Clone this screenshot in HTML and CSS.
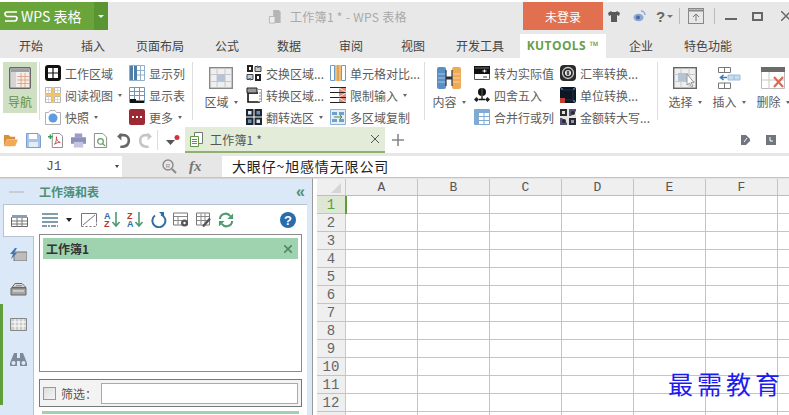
FILE: index.html
```html
<!DOCTYPE html>
<html lang="zh">
<head>
<meta charset="utf-8">
<title>工作簿1 - WPS 表格</title>
<link rel="stylesheet" href="styles.css">
</head>
<body>
<div class="app">
  <header class="titlebar">
    <div class="brand">
      <div class="brand-main"><svg class="brand-s" viewBox="0 0 14 11"><path d="M13 1H3Q1 1 1 3T3 5.500H11Q13 5.500 13 7.500T11 10H1" fill="none" stroke="#fff" stroke-width="1.700"/></svg><span>WPS 表格</span></div>
      <div class="brand-arrow"><i></i></div>
    </div>
    <div class="doc-title">
      <svg class="ic14" viewBox="0 0 14 16"><path d="M5 1h6l2 2v12H5z" fill="#b5b5b5"/><path d="M1 8h6v7H1z" fill="#eee" stroke="#b5b5b5"/></svg>
      <span>工作簿1 * - WPS 表格</span>
    </div>
    <div class="login">未登录</div>
    <div class="winctl">
      <svg class="w-shirt" viewBox="0 0 12 11"><path d="M3 0 0 2l1 3 2-1v7h6V4l2 1 1-3-3-2-1 1H4z" fill="#5a5a5a"/></svg>
      <svg class="w-weibo" viewBox="0 0 13 12"><ellipse cx="5.500" cy="7.500" rx="5" ry="3.800" fill="#8aa9d2"/><circle cx="5" cy="7.500" r="2" fill="#4a6d9f"/><path d="M8 1a4 4 0 0 1 4 4" stroke="#8aa9d2" fill="none" stroke-width="1.500"/></svg>
      <span class="w-help">?</span><i class="w-caret"></i>
      <b class="w-sep"></b>
      <svg class="w-up" viewBox="0 0 16 16"><rect x=".5" y=".5" width="15" height="15" fill="none" stroke="#888"/><path d="M1 2.500h14" stroke="#888" stroke-width="2"/><path d="M8 13V6M5 9l3-3 3 3" stroke="#777" fill="none"/></svg>
      <b class="w-sep w-sep2"></b>
      <b class="w-min"></b>
      <b class="w-max"></b>
      <svg class="w-close" viewBox="0 0 10 10"><path d="M0 0l10 10M0 10 10 0" stroke="#666" stroke-width="1.500"/></svg>
    </div>
  </header>

  <nav class="tabs">
    <span class="tab">开始</span><span class="tab">插入</span><span class="tab wide">页面布局</span><span class="tab">公式</span><span class="tab">数据</span><span class="tab">审阅</span><span class="tab">视图</span><span class="tab wide">开发工具</span>
    <span class="tab-active">KUTOOLS ™</span>
    <span class="tab">企业</span><span class="tab wide">特色功能</span>
  </nav>

  <section class="ribbon">
    <div class="big nav-btn">
      <svg class="ic-big" viewBox="0 0 22 22"><rect x=".7" y=".7" width="20.600" height="20.600" rx="1" fill="#eee" stroke="#666" stroke-width="1.400"/><path d="M2 2h18v3H2z" fill="#a0a0a0"/><path d="M2 5h5v15H2z" fill="#d5d5d5"/><path d="M8 6h12v14H8z" fill="#f8ece4"/><path d="M8 9.500h12M8 13h12M8 16.500h12M12 6v14M16 6v14" stroke="#d99a80" stroke-width=".8"/></svg>
      <span>导航</span>
    </div>
    <b class="rsep sep1"></b>
    <div class="col c1">
      <div class="item"><svg class="ic" viewBox="0 0 16 16"><rect width="16" height="16" rx="3" fill="#111"/><rect x="3" y="3" width="10" height="10" fill="#fff"/><path d="M3 8h10M8 3v10" stroke="#111" stroke-width="1.200"/></svg>工作区域</div>
      <div class="item"><svg class="ic" viewBox="0 0 16 16"><path d="M.5.500h6v6h-6zM9.500.500h6v6h-6zM.5 9.500h6v6h-6zM9.500 9.500h6v6h-6z" fill="#fff" stroke="#b5b5b5"/><path d="M3.500 1v14M12.500 1v14M1 3.500h14M1 12.500h14" stroke="#ccc" stroke-width=".7"/><path d="M8 0v16M0 8h16" stroke="#f3c567" stroke-width="2.400"/></svg>阅读视图<i class="caret"></i></div>
      <div class="item"><svg class="ic" viewBox="0 0 16 16"><path d="M.5 3.500h3l1.500-2h5l1.500 2h4v12H.5z" fill="#fff" stroke="#b0b0b0"/><circle cx="8" cy="9" r="4.500" fill="#5f9be0"/></svg>快照<i class="caret"></i></div>
    </div>
    <div class="col c2">
      <div class="item"><svg class="ic" viewBox="0 0 16 16"><path d="M.5.500h15v15H.5z" fill="#fff" stroke="#8fb0cc"/><path d="M1 1h3v14H1zM5 1h3v14H5z" fill="#4d7fa8"/><path d="M8 5.500h7M8 10h7M11.500 1v14" stroke="#8fb0cc"/></svg>显示列</div>
      <div class="item"><svg class="ic" viewBox="0 0 16 16"><path d="M.5.500h15v15H.5z" fill="#fff" stroke="#6f98ba"/><path d="M1 4.500h14M1 8.500h14M5.500 1v12M10.500 1v12" stroke="#6f98ba"/><path d="M1 12h6v1.500h8V16H1z" fill="#111"/></svg>显示表</div>
      <div class="item"><svg class="ic" viewBox="0 0 16 16"><rect width="16" height="16" rx="2" fill="#9c2a33"/><path d="M3 7h2v2H3zM7 7h2v2H7zM11 7h2v2h-2z" fill="#fff"/></svg>更多<i class="caret"></i></div>
    </div>
    <b class="rsep sep2"></b>
    <div class="big b-area">
      <svg class="ic-big" viewBox="0 0 24 22"><rect x=".7" y=".7" width="22.600" height="20.600" fill="#efefef" stroke="#888" stroke-width="1.400"/><path d="M1 7.500h22M1 14.500h22M8 1v20M16 1v20" stroke="#c8c8c8"/><path d="M8 7.500h8v7H8z" fill="#b4c4d2"/></svg>
      <span>区域<i class="caret"></i></span>
    </div>
    <div class="col c3">
      <div class="item"><svg class="ic" viewBox="0 0 16 16"><path d="M1 0h6v7H1z" fill="#222"/><path d="M3 2h2v3H3z" fill="#fff"/><path d="M9 1.500h6v5H9z" fill="#ccc" stroke="#444"/><path d="M11 0l3 3h-3z" fill="#4d7fa8"/><path d="M1 9.500h6v5H1z" fill="#ccc" stroke="#444"/><path d="M5 16l-3-3h3z" fill="#4d7fa8"/><path d="M9 9h6v7H9z" fill="#222"/><path d="M11 11h2v3h-2z" fill="#fff"/></svg>交换区域...</div>
      <div class="item"><svg class="ic" viewBox="0 0 16 16"><path d="M2 6h11v9H2z" fill="#fff" stroke="#111" stroke-width="1.600"/><path d="M1 1h10v5H1z" fill="#999" stroke="#222"/><path d="M12 2.500h3.500v12H12" fill="#fff" stroke="#888" stroke-width=".8"/><path d="M13 6h2M13 9h2M13 12h2" stroke="#888"/></svg>转换区域...</div>
      <div class="item"><svg class="ic" viewBox="0 0 16 16"><path d="M0 0h7.500v7.500H0zM8.500 0H16v7.500H8.500zM0 8.500h7.500V16H0zM8.500 8.500H16V16H8.500z" fill="#1d2732"/><path d="M2 2h3.500v3.500H2zM10.500 10.500H14V14h-3.500z" fill="#dfe6ee"/><path d="M10.500 2H14v3.500h-3.500zM2 10.500h3.500V14H2z" fill="#6f94b8"/></svg>翻转选区<i class="caret"></i></div>
    </div>
    <div class="col c4">
      <div class="item"><svg class="ic" viewBox="0 0 16 16"><path d="M.5.500h4v15h-4zM11.500.500h4v15h-4z" fill="#fff" stroke="#6b9cc8"/><path d="M5 0h6v16H5z" fill="#efbd78"/><path d="M8 0v16" stroke="#c58b3a"/></svg>单元格对比...</div>
      <div class="item"><svg class="ic" viewBox="0 0 16 16"><path d="M0 .500h16M0 5.500h16M0 10.500h16M0 15.500h16" stroke="#222" stroke-width="1.200"/><path d="M9 1h7v4H9zM9 6h7v4H9zM9 11h7v4H9z" fill="#e58d7c"/><path d="M9 1l7 4M16 6l-7 4M9 11l7 4" stroke="#fff" stroke-width=".7"/></svg>限制输入<i class="caret"></i></div>
      <div class="item"><svg class="ic" viewBox="0 0 16 16"><path d="M.5.500h15v15H.5z" fill="#e3eef8" stroke="#8db2d5"/><path d="M2 3h5v3H2zM9 3h5v3H9zM2 10h5v3H2zM9 10h5v3H9z" fill="#6ea0cf"/><path d="M4 8h8M10 6l2 2-2 2" stroke="#4b8a3a" fill="none"/></svg>多区域复制</div>
    </div>
    <b class="rsep sep3"></b>
    <div class="big b-content">
      <svg class="ic-big" viewBox="0 0 24 22"><rect x="0" y="0" width="9" height="22" rx="2" fill="#5a8fc6"/><rect x="15" y="0" width="9" height="22" rx="2" fill="#eeaa56"/><path d="M9 11h6" stroke="#26323e" stroke-width="3"/><path d="M9 3v16M15 3v16" stroke="#2c3a47" stroke-width="1.200"/><path d="M1 7h7M1 11h7M1 15h7M16 7h7M16 11h7M16 15h7" stroke="#fff" stroke-width=".5"/></svg>
      <span>内容<i class="caret"></i></span>
    </div>
    <div class="col c5">
      <div class="item"><svg class="ic" viewBox="0 0 16 16"><path d="M.5 1.500h15v13H.5z" fill="#fff" stroke="#555"/><path d="M0 1h16v8H0z" fill="#111"/><path d="M1 3h14" stroke="#bbb" stroke-width=".6"/><path d="M8.500 6h4M10.500 4.500v3" stroke="#fff"/><path d="M9 12h4" stroke="#444"/></svg>转为实际值</div>
      <div class="item"><svg class="ic" viewBox="0 0 16 16"><circle cx="8" cy="5" r="4" fill="#111"/><path d="M8 1v8" stroke="#777" stroke-width=".8"/><path d="M2.500 10 5 12.500 2.500 15 0 12.500zM13.500 10l2.500 2.500-2.500 2.500-2.500-2.500z" fill="#222"/><path d="M5 12.500h6M8 9v3.500" stroke="#111" stroke-width="1.300"/></svg>四舍五入</div>
      <div class="item"><svg class="ic" viewBox="0 0 16 16"><path d="M.5.500h15v15H.5z" fill="#fff" stroke="#7fabd3"/><path d="M1 1h4v14H1z" fill="#7fabd3"/><path d="M5 1h10v3H5z" fill="#7fabd3"/><path d="M5 7.500h10M5 11.500h10M10 4v11" stroke="#7fabd3"/></svg>合并行或列</div>
    </div>
    <div class="col c6">
      <div class="item"><svg class="ic" viewBox="0 0 16 16"><rect width="16" height="16" rx="4" fill="#2b2b2b"/><circle cx="8" cy="8" r="5.500" fill="none" stroke="#c9c9c9" stroke-width="1.300"/><circle cx="8" cy="8" r="3" fill="#fff"/><path d="M8 5.500v5M6.500 7h3M6.500 9h3" stroke="#222"/></svg>汇率转换...</div>
      <div class="item"><svg class="ic" viewBox="0 0 16 16"><rect width="16" height="16" rx="2" fill="#0e1623"/><path d="M0 11h5v5H0z" fill="#bf3e32"/><path d="M1 1h2v2H1zM13 1h2v2h-2zM13 13h2v2h-2z" fill="#41658c"/><path d="M3 3h10v10H5" fill="none" stroke="#1f3550"/></svg>单位转换...</div>
      <div class="item"><svg class="ic" viewBox="0 0 16 16"><path d="M0 0h16v16H0z" fill="#e5e5e5"/><path d="M0 0h7v7H0zM9 9h7v7H9z" fill="#2b2b2b"/><path d="M2 2h3v3H2z" fill="#ddd"/><path d="M9 0h7v2l-5 5H9zM0 9h2l5 5v2H0z" fill="#557"/><path d="M11 11h3v3h-3z" fill="#7fa0c4"/><circle cx="13" cy="4" r="2" fill="#2b2b2b"/><circle cx="4" cy="12" r="2" fill="#2b2b2b"/></svg>金额转大写...</div>
    </div>
    <b class="rsep sep4"></b>
    <div class="big b-sel">
      <svg class="ic-big" viewBox="0 0 24 22"><rect x=".7" y=".7" width="22.600" height="20.600" fill="#efefef" stroke="#666" stroke-width="1.400"/><path d="M1 7.500h22M1 14.500h22M8 1v20M16 1v20" stroke="#c8c8c8"/><path d="M5 6h10v8H5z" fill="#b4c4d2"/><path d="M14 7v11l2.500-2 2 4 1.500-1-2-3.500h3z" fill="#fff" stroke="#999"/></svg>
      <span>选择<i class="caret"></i></span>
    </div>
    <div class="big b-ins">
      <svg class="ic-big" viewBox="0 0 24 22"><path d="M1.500.500h12v5h-12zM1.500 16h12v5.500h-12zM7.500 16v5.500M7.500.500v5" fill="#fff" stroke="#777"/><path d="M11 8h12v5H11z" fill="#c7dbf0" stroke="#9bbcdc"/><path d="M17 8v5" stroke="#9bbcdc"/><path d="M10 10.500H4M6.500 8 3.500 10.500 6.500 13" stroke="#3f79b5" fill="none" stroke-width="1.600"/></svg>
      <span>插入<i class="caret"></i></span>
    </div>
    <div class="big b-del">
      <svg class="ic-big" viewBox="0 0 24 22"><path d="M.500.500h23v21H.5z" fill="#fff" stroke="#bbb"/><path d="M0 0h24v5H0z" fill="#6b6b6b"/><path d="M8 5v17M1 13h22" stroke="#c8c8c8"/><path d="M13 10l9 10M22 10l-9 10" stroke="#dd6a56" stroke-width="2.200"/></svg>
      <span>删除<i class="caret"></i></span>
    </div>
  </section>

  <section class="quick">
    <div class="qicons">
      <svg class="q" viewBox="0 0 16 14"><path d="M1 1h5l2 2h5v3H4L1 13z" fill="#d9903c"/><path d="M4 6h12l-3 7H1z" fill="#f0ab5a"/></svg>
      <svg class="q" viewBox="0 0 15 15"><path d="M.500.500H12l2.500 2.500v11.500H.5z" fill="#a9c4e4" stroke="#7b9fcc"/><path d="M3 1h8v5H3z" fill="#fff"/><path d="M3 9h9v5H3z" fill="#e3edf8"/></svg>
      <svg class="q" viewBox="0 0 16 16"><path d="M4.500.500h8l3 3v12h-11z" fill="#fff" stroke="#888"/><path d="M7 12c2-2 2-6 2-8 0 3 1 5 4 6-2 0-4 .5-6 2z" fill="none" stroke="#c8403a"/><path d="M0 4h5M2.500 1.500v5" stroke="#3d9a5a" stroke-width="1.500"/></svg>
      <svg class="q" viewBox="0 0 16 15"><path d="M4 0h8v4H4z" fill="#9d9dc4"/><path d="M0 4h16v7H0z" fill="#8f8fbb"/><path d="M3 9h10v6H3z" fill="#c5c5dd"/></svg>
      <svg class="q" viewBox="0 0 14 16"><path d="M.500.500h9l4 4v11H.5z" fill="#fff" stroke="#888"/><circle cx="7" cy="9" r="3" fill="none" stroke="#5fa05f" stroke-width="1.300"/><path d="M9 11l3 3" stroke="#5fa05f" stroke-width="1.300"/></svg>
      <svg class="q" viewBox="0 0 14 14"><path d="M4 13c6 0 8-3 8-6s-2-5-5-5H3" fill="none" stroke="#666" stroke-width="2.400"/><path d="M5 0 1 3l4 4z" fill="#666"/></svg>
      <svg class="q" viewBox="0 0 14 14"><path d="M10 13c-6 0-8-3-8-6s2-5 5-5h4" fill="none" stroke="#c5c5c5" stroke-width="2.400"/><path d="M9 0l4 3-4 4z" fill="#c5c5c5"/></svg>
      <b class="q-sep"></b>
      <svg class="q-more" viewBox="0 0 14 11"><path d="M0 5h9L4.500 10z" fill="#555"/><circle cx="11" cy="2.500" r="2.500" fill="#d8303a"/></svg>
    </div>
    <div class="doctab">
      <svg class="ic14" viewBox="0 0 14 15"><path d="M4.500.500h8v11h-8z" fill="#fff" stroke="#777"/><path d="M.500 4.500h8v10h-8z" fill="#fff" stroke="#5b9a3f"/><path d="M2 7.500h5M2 9.500h5M2 11.500h5" stroke="#5b9a3f"/></svg>
      <span>工作簿1 *</span>
      <svg class="doctab-x" viewBox="0 0 8 8"><path d="M0 0l8 8M0 8l8-8" stroke="#555"/></svg>
    </div>
    <svg class="q-plus" viewBox="0 0 12 12"><path d="M6 0v12M0 6h12" stroke="#888" stroke-width="1.600"/></svg>
    <div class="q-right">
      <svg class="q-r1" viewBox="0 0 9 10"><path d="M0 0h5l4 4v2l-4 4H0z" fill="#71757f"/><path d="M3 7l3-4" stroke="#fff"/></svg>
      <svg class="q-r2" viewBox="0 0 10 10"><path d="M0 0h10v10H0z" fill="#71757f"/><path d="M4 2v4h3" stroke="#fff" fill="none"/></svg>
    </div>
  </section>

  <section class="formula">
    <div class="namebox"><span>J1</span><i class="caret dark"></i></div>
    <div class="fx-tools">
      <svg class="mag" viewBox="0 0 15 15"><circle cx="6" cy="6" r="5" fill="none" stroke="#8a8a8a" stroke-width="1.400"/><path d="M10 10l4 4" stroke="#8a8a8a" stroke-width="2"/><text x="3.800" y="8.500" class="mag-r">R</text></svg>
      <span class="fx">fx</span>
    </div>
    <div class="fx-input">大眼仔~旭感情无限公司</div>
  </section>

  <main class="work">
    <aside class="panel">
      <div class="p-head">
        <b class="grip"></b>
        <span class="p-title">工作簿和表</span>
        <span class="p-collapse">«</span>
      </div>
      <div class="p-body">
        <div class="rail">
          <div class="rail-item on"><svg class="ri" viewBox="0 0 17 13"><path d="M.500 3.500h16v9H.5z" fill="#fff" stroke="#666"/><path d="M1 1h15v3H1z" fill="#8a9eb5"/><path d="M1 7h15M1 10h15M6 4v9M11 4v9" stroke="#777"/></svg></div>
          <div class="rail-item"><svg class="ri" viewBox="0 0 17 13"><path d="M4 4h13v9H4z" fill="#bdbdbd" stroke="#777"/><path d="M5 0 0 6h3l-2 5 6-6H4l3-5z" fill="#3f79b5"/></svg></div>
          <div class="rail-item"><svg class="ri" viewBox="0 0 17 13"><path d="M5 .500h7l4 4H2z" fill="#ddd" stroke="#666"/><path d="M6 2.500h6M4 4h8" stroke="#777" stroke-width=".7"/><path d="M1 5h15v7H1z" fill="#a5a5a5" stroke="#666"/><path d="M3 8h11" stroke="#eee"/></svg></div>
          <div class="rail-item"><svg class="ri" viewBox="0 0 17 13"><path d="M.500.500h16v12H.5z" fill="#ccc" stroke="#888"/><path d="M5 1v11M9 1v11M13 1v11M1 4h15M1 8h15" stroke="#fff"/></svg></div>
          <div class="rail-item"><svg class="ri" viewBox="0 0 17 13"><path d="M4 0h3v5h3V0h3l4 10v3h-7V8H7v5H0v-3z" fill="#7d8a99"/><circle cx="3.500" cy="10" r="2" fill="#dbe8f7"/><circle cx="13.500" cy="10" r="2" fill="#dbe8f7"/></svg></div>
        </div>
        <div class="p-content">
          <div class="p-tools">
            <svg class="t" viewBox="0 0 16 14"><path d="M0 1h16M0 5h16M0 9h16" stroke="#5a7f90" stroke-width="1.600"/><path d="M0 13h16" stroke="#5a7f90" stroke-width="1.600" stroke-dasharray="5 1 2 1"/></svg>
            <i class="t-caret"></i>
            <svg class="t" viewBox="0 0 16 14"><path d="M.500 13.500V.500h15v9" fill="none" stroke="#777"/><path d="M.500 13.500h15v-4" fill="none" stroke="#777" stroke-dasharray="2 2"/><path d="M2 12 14 2" stroke="#777"/></svg>
            <svg class="t2" viewBox="0 0 17 17"><text x="0" y="8" class="az blue">A</text><text x="0" y="16" class="az red">Z</text><path d="M12 1v14M8.500 11l3.500 4 3.500-4" fill="none" stroke="#4e9a72" stroke-width="1.600"/></svg>
            <svg class="t2" viewBox="0 0 17 17"><text x="0" y="8" class="az red">Z</text><text x="0" y="16" class="az blue">A</text><path d="M12 1v14M8.500 11l3.500 4 3.500-4" fill="none" stroke="#4e9a72" stroke-width="1.600"/></svg>
            <svg class="t" viewBox="0 0 16 16"><path d="M10 2.600A6.500 6.500 0 1 1 4 3.500" fill="none" stroke="#2f6ea5" stroke-width="2"/><path d="M8 0h5v5z" fill="#2f6ea5"/></svg>
            <svg class="t" viewBox="0 0 16 15"><path d="M.500.500h14v12H.5z" fill="#fff" stroke="#777"/><path d="M1 4h13M1 8h8M5 4v8" stroke="#888"/><circle cx="11.500" cy="10.500" r="3.500" fill="#555"/><circle cx="11.500" cy="10.500" r="1.200" fill="#fff"/></svg>
            <svg class="t" viewBox="0 0 16 15"><path d="M.500.500h13v12H.5z" fill="#fff" stroke="#777"/><path d="M1 4h12M1 8h12M5 1v11M9 1v11" stroke="#888"/><path d="M7 14 14 6" stroke="#555" stroke-width="2.400"/></svg>
            <svg class="t" viewBox="0 0 17 16"><path d="M2 7a6 6 0 0 1 11-3M15 9a6 6 0 0 1-11 3" fill="none" stroke="#4e9a72" stroke-width="2.200"/><path d="M16 1v6h-6zM1 15V9h6z" fill="#4e9a72"/></svg>
            <svg class="t-help" viewBox="0 0 16 16"><circle cx="8" cy="8" r="8" fill="#2a6cab"/><text x="8" y="12.500" class="t-q">?</text></svg>
          </div>
          <div class="list-box">
            <div class="book-row"><span>工作簿1</span><svg class="book-x" viewBox="0 0 8 8"><path d="M0 0l8 8M0 8l8-8" stroke="#4e8a6a" stroke-width="1.600"/></svg></div>
          </div>
          <div class="filter-box">
            <span class="check"></span>
            <span class="f-label">筛选：</span>
            <span class="f-input"></span>
          </div>
          <div class="book-row2"></div>
        </div>
      </div>
    </aside>
    <section class="sheet">
      <div class="colhead">
        <div class="corner"><i></i></div>
        <span>A</span><span>B</span><span>C</span><span>D</span><span>E</span><span>F</span><span></span>
      </div>
      <div class="sheet-body">
        <div class="rowhead">
          <span class="on">1</span><span>2</span><span>3</span><span>4</span><span>5</span><span>6</span><span>7</span><span>8</span><span>9</span><span>10</span><span>11</span><span>12</span>
        </div>
        <div class="cells"><i class="cursor"></i></div>
      </div>
    </section>
  </main>
  <div class="watermark">最需教育</div>
</div>
</body>
</html>
```
FILE: styles.css
```css
* { box-sizing: border-box; }
html, body { margin: 0; padding: 0; background: #fff; }
body { font-family: "Noto Sans CJK SC", "Noto Sans", sans-serif; font-size: 12px; color: #555; }
svg { display: block; flex: none; }
i, b { display: block; font-style: normal; }
.app { position: relative; width: 789px; height: 415px; overflow: hidden; background: #fff; padding-top: 2px; }

/* title bar */
.titlebar { display: flex; height: 28px; background: #e8e8e8; }
.brand { display: flex; flex: none; width: 108px; background: #6aa53c; color: #fff; }
.brand-main { display: flex; align-items: center; flex: none; width: 94px; padding-left: 4px; gap: 3px; font-size: 14px; white-space: nowrap; }
.brand-s { width: 14px; height: 11px; }
.brand-arrow { flex: 1; background: #5a9534; display: flex; align-items: center; justify-content: center; }
.brand-arrow i { border: 3px solid transparent; border-top-color: #dfe; border-bottom: 0; }
.doc-title { display: flex; align-items: center; flex: none; gap: 8px; width: 415px; padding-left: 160px; color: #a9a9a9; letter-spacing: .3px; white-space: nowrap; }
.ic14 { width: 14px; height: 15px; }
.login { flex: none; width: 80px; background: #e0704f; color: #fff; display: flex; align-items: center; justify-content: center; }
.winctl { display: flex; align-items: center; flex: none; width: 186px; padding-left: 5px; }
.w-shirt { width: 12px; height: 11px; }
.w-weibo { width: 13px; height: 12px; margin-left: 13px; }
.w-help { margin-left: 10px; font-size: 15px; line-height: 1; color: #666; font-weight: 700; font-family: "Liberation Sans", sans-serif; }
.w-caret { margin-left: 2px; border: 3px solid transparent; border-top-color: #777; border-bottom: 0; }
.w-sep { flex: none; width: 1px; height: 16px; background: #bbb; margin-left: 6px; }
.w-up { width: 16px; height: 16px; margin-left: 8px; }
.w-sep2 { margin-left: 10px; }
.w-min { flex: none; width: 12px; height: 2px; background: #666; margin-left: 10px; margin-top: 6px; }
.w-max { flex: none; width: 11px; height: 9px; border: 2px solid #666; margin-left: 15px; }
.w-close { width: 10px; height: 10px; margin-left: 18px; }

/* tabs */
.tabs { display: flex; height: 28px; background: #e8e8e8; padding-top: 4px; font-size: 12px; color: #444; }
.tab { flex: none; width: 62px; text-align: center; line-height: 24px; }
.tab.wide { width: 72px; }
.tab-active { flex: none; width: 86px; margin: 0 4px; background: #fff; color: #6a9e48; font-weight: 700; font-size: 12px; letter-spacing: .4px; line-height: 24px; text-align: center; white-space: nowrap; font-family: "Open Sans", "Noto Sans", sans-serif; }

/* ribbon */
.ribbon { display: flex; height: 69px; background: #fff; padding-top: 4px; color: #5c5c5c; }
.big { display: flex; flex: none; flex-direction: column; align-items: center; width: 34px; height: 51px; padding-top: 5px; }
.big span { display: flex; align-items: center; margin-top: 3px; line-height: 20px; white-space: nowrap; }
.ic-big { width: 24px; height: 22px; }
.nav-btn { margin-left: 3px; background: #cfe0c4; color: #5f8f4a; }
.nav-btn .ic-big { width: 22px; }
.rsep { flex: none; width: 1px; height: 58px; background: #dedede; }
.sep1 { margin-left: 2px; }
.col { display: grid; flex: none; grid-auto-rows: 22px; }
.item { display: flex; align-items: center; gap: 4px; white-space: nowrap; }
.ic { width: 16px; height: 16px; }
.c1 { width: 84px; margin-left: 5px; }
.c2 { width: 63px; }
.sep2 { margin-left: 0; }
.b-area { margin-left: 11px; }
.c3 { width: 84px; margin-left: 8px; }
.c4 { width: 94px; }
.b-content { margin-left: 7px; }
.c5 { width: 86px; margin-left: 8px; }
.c6 { width: 97px; }
.b-sel { margin-left: 10px; }
.b-ins { margin-left: 10px; }
.b-del { margin-left: 10px; }
.caret { flex: none; display: inline-block; margin-left: 5px; border: 2.500px solid transparent; border-top: 3px solid #666; border-bottom: 0; }
.item .caret { margin-left: 1px; }
.caret.dark { border-top-color: #444; }

/* quick toolbar */
.quick { display: flex; height: 26px; background: #fff; align-items: stretch; }
.qicons { display: flex; align-items: center; flex: none; width: 185px; padding-left: 3px; gap: 7.500px; }
.q { width: 15px; height: 15px; }
.q-sep { flex: none; width: 1px; height: 20px; background: #ddd; margin-left: -3.500px; }
.q-more { width: 14px; height: 11px; }
.doctab { display: flex; flex: none; align-items: center; width: 200px; padding-left: 5px; gap: 6px; background: #e2ecd8; border-bottom: 2px solid #8fb070; }
.doctab span { flex: 1; letter-spacing: .2px; }
.doctab-x { width: 8px; height: 8px; margin-right: 6px; }
.q-plus { width: 12px; height: 12px; margin: 7px 0 0 7px; }
.q-right { flex: 1; display: flex; align-items: center; justify-content: flex-end; gap: 16px; padding-right: 13px; }
.q-r1 { width: 9px; height: 10px; }
.q-r2 { width: 10px; height: 10px; }

/* formula bar */
.formula { display: flex; height: 25px; background: #e7e7e7; padding-top: 3px; border-bottom: 1px solid #c4c4c4; }
.namebox { display: flex; align-items: center; flex: none; width: 122px; background: #fff; padding-left: 46px; font-family: "Liberation Mono", monospace; font-size: 13px; color: #555; }
.namebox span { flex: 1; }
.namebox .caret { margin-right: 3px; }
.fx-tools { display: flex; align-items: center; flex: none; width: 100px; padding-left: 40px; gap: 12px; }
.mag { width: 15px; height: 15px; }
.mag-r { font-size: 6px; fill: #8a8a8a; font-family: "Liberation Sans", sans-serif; }
.fx { font-family: "Liberation Serif", serif; font-style: italic; font-size: 15px; font-weight: 700; color: #777; }
.fx-input { flex: 1; background: #fff; padding-left: 10px; font-size: 14px; letter-spacing: .85px; line-height: 21px; color: #222; }

/* work area */
.work { display: flex; height: 237px; background: #fff; }
.panel { flex: none; width: 313px; background: #dbe8f7; border-right: 1px solid #9a9a9a; border-top: 1px solid #d5d5d5; padding-right: 5px; display: flex; flex-direction: column; }
.p-head { display: flex; align-items: center; height: 25px; flex: none; }
.grip { flex: none; width: 15px; height: 2px; margin-left: 9px; background: #c9ccd2; }
.p-title { margin-left: 15px; flex: 1; font-weight: 700; color: #4f8f75; font-size: 12px; }
.p-collapse { font-size: 16px; line-height: 20px; font-weight: 700; color: #4f8f75; margin-right: 2px; font-family: "Liberation Sans", sans-serif; }
.p-body { display: flex; flex: 1; }
.rail { width: 34px; flex: none; position: relative; border-right: 1px solid #b9c3cf; }
.rail::after { content: ""; position: absolute; left: 0; top: 100px; width: 3px; height: 101px; background: #5f9e3a; }
.rail-item { display: flex; align-items: center; justify-content: center; height: 35px; padding-left: 3px; }
.rail-item.on { height: 33px; margin-left: 3px; margin-right: -1px; padding-left: 0; background: #fff; border: 1px solid #b9c3cf; border-right: 0; position: relative; z-index: 1; }
.ri { width: 17px; height: 13px; }
.p-content { flex: 1; min-width: 0; background: #fff; border-top: 1px solid #b9c3cf; display: flex; flex-direction: column; padding: 0 5px 0 6px; margin-left: -1px; }
.p-tools { display: flex; align-items: center; height: 29px; flex: none; padding-left: 3px; }
.t { width: 16px; height: 16px; margin-right: 6.500px; }
.t2 { width: 17px; height: 17px; margin-right: 6.500px; }
.t-caret { flex: none; border: 3.500px solid transparent; border-top: 4px solid #222; border-bottom: 0; margin: 0 9px 0 1.500px; }
.t-help { width: 16px; height: 16px; margin-left: 39px; }
.t-q { font-size: 13px; font-weight: 700; fill: #fff; text-anchor: middle; font-family: "Liberation Sans", sans-serif; }
.az { font-size: 9px; font-weight: 700; font-family: "Liberation Sans", sans-serif; }
.blue { fill: #2f6ea5; }
.red { fill: #b03a30; }
.list-box { height: 138px; border: 1px solid #8a8a8a; padding: 3px; flex: none; }
.book-row { display: flex; align-items: center; justify-content: space-between; height: 21px; padding: 0 3px; background: #9fd3af; font-weight: 700; color: #333; }
.book-x { width: 8px; height: 8px; margin-right: 3px; }
.filter-box { display: flex; align-items: center; height: 28px; margin-top: 7px; flex: none; border: 1px solid #777; background: #f3f3f3; padding: 0 3px; }
.check { width: 13px; height: 13px; border: 1px solid #999; background: linear-gradient(135deg, #ddd, #f5f5f5); flex: none; }
.f-label { width: 40px; margin-left: 5px; color: #555; flex: none; white-space: nowrap; }
.f-input { flex: 1; height: 21px; background: #fff; border: 1px solid #aaa; }
.book-row2 { height: 3px; margin: 4px 3px 0; background: #9fd3af; flex: none; }

/* sheet */
.sheet { flex: 1; min-width: 0; display: flex; flex-direction: column; padding-left: 4px; border-top: 1px solid #e4e4e4; }
.colhead { display: flex; height: 17px; flex: none; background: #efefef; border-bottom: 1px solid #bdbdbd; font-family: "Liberation Mono", monospace; font-size: 13px; line-height: 17px; color: #555; }
.corner { width: 29px; flex: none; display: flex; align-items: flex-end; justify-content: flex-end; padding: 0 4px 2px 0; border-right: 1px solid #c8c8c8; }
.corner i { border-left: 10px solid transparent; border-bottom: 10px solid #d6d6d6; }
.colhead span { width: 72px; flex: none; text-align: center; border-right: 1px solid #c4c4c4; }
.sheet-body { display: flex; flex: 1; }
.rowhead { width: 29px; flex: none; background: #efefef; border-right: 1px solid #c8c8c8; font-family: "Liberation Mono", monospace; font-size: 14px; color: #666; }
.rowhead span { display: block; height: 18px; line-height: 19px; text-align: center; border-bottom: 1px solid #c4c4c4; }
.rowhead .on { background: #dde7d3; color: #5f9e3a; }
.cells { flex: 1; position: relative; background-image: linear-gradient(to bottom, transparent 17px, #c4c4c4 17px), linear-gradient(to right, transparent 71px, #c4c4c4 71px); background-size: 72px 18px, 72px 18px; }
.cursor { position: absolute; left: -1px; top: 0; width: 2px; height: 18px; background: #5f9e3a; }

.watermark { position: absolute; left: 668px; top: 366px; font-size: 25px; letter-spacing: 4px; line-height: 34px; color: #1c1cf0; white-space: nowrap; }
```
